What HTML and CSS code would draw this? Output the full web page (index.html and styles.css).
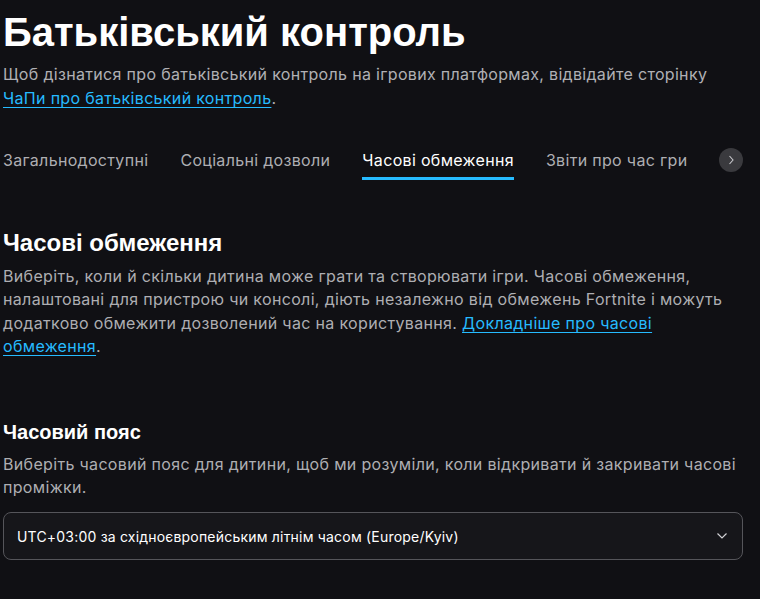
FILE: index.html
```html
<!DOCTYPE html>
<html lang="uk">
<head>
    <meta charset="UTF-8">
    <meta name="viewport" content="width=device-width, initial-scale=1.0">
    <title>Батьківський контроль</title>
    <link rel="stylesheet" href="styles.css">
</head>
<body>
    <div class="page">
        <h1 class="title">Батьківський контроль</h1>
        <p class="intro">Щоб дізнатися про батьківський контроль на ігрових платформах, відвідайте сторінку <a href="#">ЧаПи про батьківський контроль</a>.</p>

        <nav class="tabs">
            <a class="tab" href="#">Загальнодоступні</a>
            <a class="tab" href="#">Соціальні дозволи</a>
            <a class="tab active" href="#">Часові обмеження</a>
            <a class="tab" href="#">Звіти про час гри</a>
            <button class="tab-next" aria-label="Далі">
                <svg width="10" height="12" viewBox="0 0 10 12"><path d="M3.5 2 L7 6 L3.5 10" fill="none" stroke="#c8c8cc" stroke-width="1.1"/></svg>
            </button>
        </nav>

        <section class="section">
            <h2>Часові обмеження</h2>
            <p>Виберіть, коли й скільки дитина може грати та створювати ігри. Часові обмеження, налаштовані для пристрою чи консолі, діють незалежно від обмежень Fortnite і можуть додатково обмежити дозволений час на користування. <a href="#">Докладніше про часові обмеження</a>.</p>
        </section>

        <section class="section zone">
            <h3>Часовий пояс</h3>
            <p>Виберіть часовий пояс для дитини, щоб ми розуміли, коли відкривати й закривати часові проміжки.</p>
            <div class="select">
                <span>UTC+03:00 за східноєвропейським літнім часом (Europe/Kyiv)</span>
                <svg width="12" height="8" viewBox="0 0 12 8"><path d="M1.5 1.5 L6 6 L10.5 1.5" fill="none" stroke="#d0d0d4" stroke-width="1.2"/></svg>
            </div>
        </section>
    </div>
</body>
</html>
```

FILE: styles.css
```css
* {
    margin: 0;
    padding: 0;
    box-sizing: border-box;
}

body {
    background: #101014;
    color: #ffffff;
    font-family: Inter, "Noto Sans", sans-serif;
    overflow: hidden;
}

.page {
    width: 743px;
    padding-left: 3px;
}

a {
    color: #26bbff;
    text-decoration: underline;
    text-underline-offset: 3px;
}

.title {
    font-family: "Liberation Sans", Arial, sans-serif;
    font-size: 40px;
    font-weight: 700;
    line-height: 48px;
    padding-top: 8px;
}

.intro {
    margin-top: 6px;
    font-size: 16px;
    line-height: 24px;
    letter-spacing: 0.32px;
    color: #b0b0b4;
}

/* Tabs */
.tabs {
    display: flex;
    align-items: center;
    margin-top: 30px;
    height: 40px;
}

.tab {
    flex-shrink: 0;
    white-space: nowrap;
    font-size: 16px;
    letter-spacing: 0.32px;
    color: #aeaeb2;
    text-decoration: none;
    margin-right: 32px;
    padding-top: 8px;
    line-height: 24px;
    height: 40px;
    border-bottom: 3px solid transparent;
}

.tab.active {
    color: #ffffff;
    border-bottom-color: #26bbff;
}

.tab-next {
    flex-shrink: 0;
    width: 24px;
    height: 24px;
    border-radius: 50%;
    border: none;
    background: #3a3a3e;
    display: flex;
    align-items: center;
    justify-content: center;
    margin-left: auto;
}

/* Sections */
.section {
    margin-top: 47px;
}

.section h2 {
    font-family: "Liberation Sans", Arial, sans-serif;
    font-size: 24px;
    line-height: 32px;
    font-weight: 700;
}

.section h3 {
    font-family: "Liberation Sans", Arial, sans-serif;
    font-size: 20px;
    line-height: 26px;
    font-weight: 700;
}

.section p {
    margin-top: 6px;
    font-size: 16px;
    line-height: 23.4px;
    letter-spacing: 0.33px;
    color: #aeaeb2;
}

.zone {
    margin-top: 60px;
}

.zone p {
    margin-top: 8px;
}

.select {
    margin-top: 13px;
    height: 48px;
    background: #16161a;
    border: 1px solid #55555a;
    border-radius: 8px;
    display: flex;
    align-items: center;
    justify-content: space-between;
    padding: 0 14px 0 13px;
    font-size: 14px;
    letter-spacing: 0.2px;
    color: #ffffff;
}
```
